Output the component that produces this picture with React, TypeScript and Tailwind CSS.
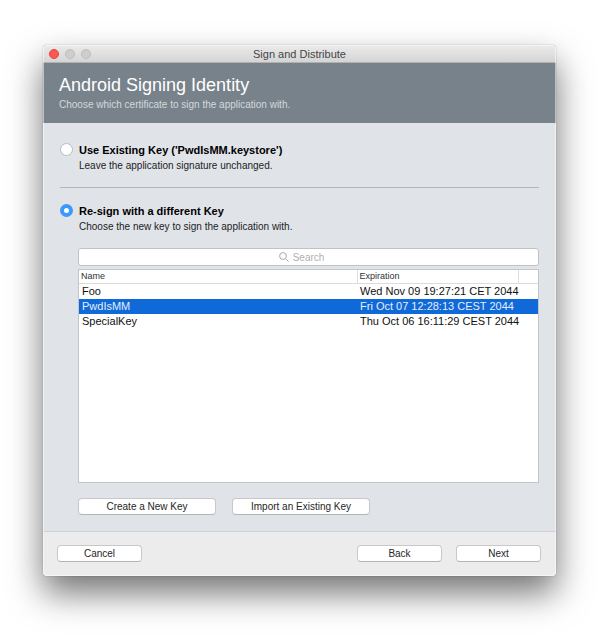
import { useState } from "react";
import type { ReactNode } from "react";

const keys = [
  { name: "Foo", expiration: "Wed Nov 09 19:27:21 CET 2044" },
  { name: "PwdIsMM", expiration: "Fri Oct 07 12:28:13 CEST 2044" },
  { name: "SpecialKey", expiration: "Thu Oct 06 16:11:29 CEST 2044" },
];

function PushButton({ children, wide = false }: { children: ReactNode; wide?: boolean }) {
  return (
    <button
      type="button"
      className={`h-[17px] rounded-[4px] border border-[#c6c8ca] border-b-[#b2b4b6] bg-white text-center text-[10px] leading-[15px] text-[#262626] ${
        wide ? "w-[138px]" : "w-[85px]"
      }`}
    >
      {children}
    </button>
  );
}

function KeyOption({
  id,
  title,
  hint,
  checked,
  onSelect,
}: {
  id: string;
  title: string;
  hint: string;
  checked: boolean;
  onSelect: () => void;
}) {
  return (
    <div className="flex items-start gap-[6px]">
      <input
        id={id}
        type="radio"
        name="signing-key"
        checked={checked}
        onChange={onSelect}
        className="mt-[1px] size-[13px] shrink-0 appearance-none rounded-full border border-[#b9bbbe] bg-white checked:border-4 checked:border-[#3b99fc]"
      />
      <label htmlFor={id} className="block">
        <span className="block text-[11px] leading-4 font-bold text-black">{title}</span>
        <span className="block text-[10px] leading-4 text-[#1c1c1c]">{hint}</span>
      </label>
    </div>
  );
}

export default function App() {
  const [mode, setMode] = useState("resign");
  const [selected, setSelected] = useState("PwdIsMM");

  return (
    <div className="bg-white pt-[45px] pr-11 pb-16 pl-[43px] font-['Liberation_Sans',Arial,sans-serif]">
      <main className="relative overflow-hidden rounded-[4px] shadow-[0_0_1px_rgba(0,0,0,0.6),0_17px_34px_rgba(0,0,0,0.55)]">
        <div className="flex h-[18px] items-center border-b border-[#b1b1b1] bg-linear-to-b from-[#ebebeb] to-[#d5d5d5] px-[6px]">
          <div className="flex flex-1 gap-[6px]">
            <button type="button" aria-label="Close" className="size-[10px] rounded-full border border-[#e2463f] bg-[#fc5753]" />
            <button type="button" aria-label="Minimize" className="size-[10px] rounded-full border border-[#bcbcbc] bg-[#cecece]" />
            <button type="button" aria-label="Zoom" className="size-[10px] rounded-full border border-[#bcbcbc] bg-[#cecece]" />
          </div>
          <p className="text-[11px] leading-4 text-[#454545]">Sign and Distribute</p>
          <div className="flex-1" />
        </div>

        <header className="bg-[#78828b] px-4 pt-[10px] pb-[10px]">
          <h1 className="text-[18px] leading-6 text-white">Android Signing Identity</h1>
          <p className="text-[10px] leading-4 text-[#d3d9dd]">Choose which certificate to sign the application with.</p>
        </header>

        <section className="bg-[#e0e4e9] pt-[19px] pr-[17px] pb-4 pl-[17px]">
          <KeyOption
            id="existing"
            title="Use Existing Key ('PwdIsMM.keystore')"
            hint="Leave the application signature unchanged."
            checked={mode === "existing"}
            onSelect={() => setMode("existing")}
          />
          <hr className="mt-[13px] mb-[15px] border-t border-[#b4b8bc]" />
          <KeyOption
            id="resign"
            title="Re-sign with a different Key"
            hint="Choose the new key to sign the application with."
            checked={mode === "resign"}
            onSelect={() => setMode("resign")}
          />

          <div className="mt-[13px] pl-[18px]">
            <div className="relative">
              <input
                type="text"
                role="searchbox"
                aria-label="Search"
                placeholder="Search"
                className="block h-[18px] w-full rounded-[3px] border border-[#c0c3c6] bg-white text-center text-[10px] leading-4 text-black placeholder:text-[#b0b0b0]"
              />
              <svg
                aria-hidden="true"
                viewBox="0 0 10 10"
                className="pointer-events-none absolute top-1 left-1/2 -ml-[30px] size-[10px] fill-none stroke-[#aaaaaa]"
              >
                <circle cx="4" cy="4" r="3.4" />
                <path d="M6.5 6.5 9.5 9.5" />
              </svg>
            </div>

            <div className="mt-[3px] h-[214px] border border-[#c3c6c9] bg-white">
              <table className="w-full table-fixed border-collapse text-left">
                <colgroup>
                  <col />
                  <col className="w-[161px]" />
                  <col className="w-[20px]" />
                </colgroup>
                <thead>
                  <tr className="h-[13px] border-b border-[#dcdcdc] text-[9px] leading-3 text-[#333333]">
                    <th scope="col" className="border-r border-[#dedede] py-0 pl-[2px] font-normal">Name</th>
                    <th scope="col" className="border-r border-[#dedede] py-0 pl-[2px] font-normal">Expiration</th>
                    <td className="p-0" />
                  </tr>
                </thead>
                <tbody>
                  {keys.map((key) => (
                    <tr
                      key={key.name}
                      aria-selected={key.name === selected}
                      onClick={() => setSelected(key.name)}
                      className={`h-[15px] text-[11px] leading-[15px] whitespace-nowrap ${
                        key.name === selected ? "bg-[#1069d8] text-[#e4effb]" : "text-[#111111]"
                      }`}
                    >
                      <td className="py-0 pl-[3px]">{key.name}</td>
                      <td className="py-0 pl-[3px]" colSpan={2}>{key.expiration}</td>
                    </tr>
                  ))}
                </tbody>
              </table>
            </div>

            <div className="mt-[15px] flex gap-4">
              <PushButton wide>Create a New Key</PushButton>
              <PushButton wide>Import an Existing Key</PushButton>
            </div>
          </div>
        </section>

        <footer className="flex gap-[14px] border-t border-[#cfd1d3] bg-[#ececec] pt-[13px] pr-[15px] pb-[14px] pl-[14px]">
          <PushButton>Cancel</PushButton>
          <div className="flex-1" />
          <PushButton>Back</PushButton>
          <PushButton>Next</PushButton>
        </footer>

        <div className="pointer-events-none absolute inset-0 rounded-[4px] shadow-[inset_0_0_0_1px_rgba(255,255,255,0.5)]" />
      </main>
    </div>
  );
}
